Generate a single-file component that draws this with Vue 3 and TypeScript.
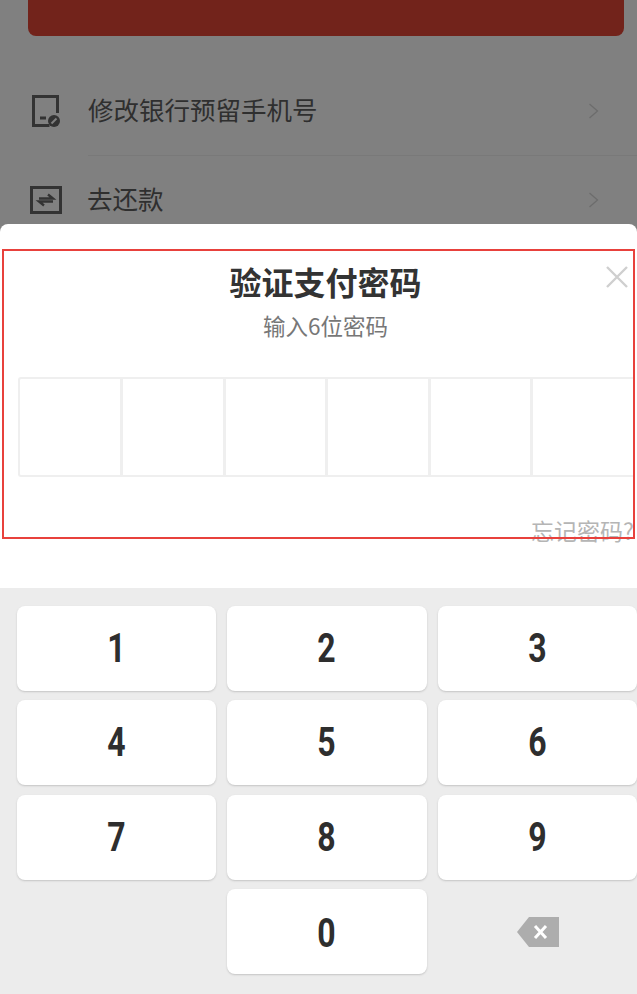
<template>
  <div class="page">
    <div class="behind">
      <div class="red-btn"></div>
      <div class="menu">
        <div class="menu-row first">
          <svg class="row-icon phone" width="28" height="32" viewBox="0 0 28 32">
            <path d="M25.5 18V1.5H1.5v29h16" fill="none" stroke="#333" stroke-width="3" />
            <path d="M8 23h6" stroke="#333" stroke-width="3" />
            <circle cx="22" cy="26" r="6" fill="#333" />
            <path d="M19.5 28.5l5-5" stroke="#808080" stroke-width="2" />
          </svg>
          <span class="row-label">修改银行预留手机号</span>
          <svg class="chev" width="11" height="16" viewBox="0 0 11 16">
            <path d="M1.5 1l8 7-8 7" fill="none" stroke="#6c6c6c" stroke-width="1.3" />
          </svg>
        </div>
        <div class="divider"></div>
        <div class="menu-row">
          <svg class="row-icon repay" width="32" height="28" viewBox="0 0 32 28">
            <rect x="1.5" y="1.5" width="29" height="25" fill="none" stroke="#333" stroke-width="3" />
            <path d="M9 12.500h14l-5-4M23 15.500H9l5 4" fill="none" stroke="#333" stroke-width="2.400" />
          </svg>
          <span class="row-label">去还款</span>
          <svg class="chev" width="11" height="16" viewBox="0 0 11 16">
            <path d="M1.5 1l8 7-8 7" fill="none" stroke="#6c6c6c" stroke-width="1.3" />
          </svg>
        </div>
      </div>
    </div>

    <div class="sheet">
      <div class="pay">
        <div class="title">验证支付密码</div>
        <svg class="close" width="24" height="24" viewBox="0 0 24 24">
          <path d="M2 2l20 20M22 2L2 22" stroke="#cfcfcf" stroke-width="2.400" />
        </svg>
        <div class="sub">输入6位密码</div>
        <div class="code">
          <div v-for="i in 6" :key="i" class="cell"></div>
        </div>
        <div class="forgot">忘记密码?</div>
        <div class="mark"></div>
      </div>

      <div class="keyboard">
        <button v-for="k in keys" :key="k" class="key"><span>{{ k }}</span></button>
        <div class="key-empty"></div>
        <button class="key zero"><span>0</span></button>
        <div class="key-del">
          <svg width="42" height="30" viewBox="0 0 42 30">
            <path d="M12 0h30v30H12L0 15z" fill="#adadad" />
            <path d="M18 9l11 12M29 9L18 21" stroke="#fff" stroke-width="3" />
          </svg>
        </div>
      </div>
    </div>
  </div>
</template>

<script setup lang="ts">
const keys: string[] = ['1', '2', '3', '4', '5', '6', '7', '8', '9'];
</script>

<style>
body {
  overflow: hidden;
}
</style>

<style scoped>
.page {
  width: 637px;
  height: 994px;
  display: flex;
  flex-direction: column;
  overflow: hidden;
  font-family: "Noto Sans CJK SC", "Liberation Sans", sans-serif;
  background: #808080;
}

.behind {
  height: 224px;
  flex: none;
  padding: 0 13px 0 28px;
  box-sizing: border-box;
  overflow: hidden;
}

.red-btn {
  height: 36px;
  background: #72231b;
  border-radius: 0 0 8px 8px;
}

.menu {
  padding-top: 31px;
}

.menu-row {
  height: 88px;
  display: flex;
  align-items: center;
}

.divider {
  height: 1px;
  margin: 0 -13px 0 60px;
  background: #797979;
}

.row-icon {
  flex: none;
}

.phone {
  margin: 0 28px 0 4px;
}

.repay {
  margin: 0 25px 0 2px;
}

.row-label {
  flex: 1;
  font-size: 25.5px;
  line-height: 34px;
  margin-top: -4px;
  color: #2f2f2f;
}

.chev {
  flex: none;
  margin-right: 25px;
}

.sheet {
  flex: 1;
  background: #fff;
  border-radius: 8px 8px 0 0;
  display: flex;
  flex-direction: column;
}

.pay {
  height: 364px;
  flex: none;
  position: relative;
  display: flex;
  flex-direction: column;
  align-items: center;
  padding: 34px 0 0 14px;
  box-sizing: border-box;
}

.title {
  font-size: 32px;
  line-height: 46px;
  font-weight: 700;
  color: #333;
}

.close {
  position: absolute;
  top: 41px;
  right: 8px;
}

.sub {
  font-size: 22.5px;
  line-height: 30px;
  margin-top: 6px;
  color: #777;
}

.code {
  align-self: flex-start;
  margin: 37px 0 0 4px;
  display: grid;
  grid-template-columns: 100px repeat(5, 102.5px);
  height: 100px;
  border: 2px solid #efefef;
  border-right: 0;
  box-sizing: border-box;
  border-radius: 3px 0 0 3px;
}

.cell + .cell {
  border-left: 3px solid #efefef;
}

.forgot {
  position: absolute;
  right: 3px;
  top: 290px;
  font-size: 23px;
  line-height: 32px;
  color: #b5b5b5;
}

.mark {
  position: absolute;
  left: 2px;
  top: 25px;
  width: 633px;
  height: 290px;
  box-sizing: border-box;
  border: 2px solid #e8413c;
  pointer-events: none;
}

.keyboard {
  flex: 1;
  background: #ececec;
  display: grid;
  grid-template-columns: repeat(3, 199.3px);
  grid-auto-rows: 84.8px;
  column-gap: 11px;
  row-gap: 9.700px;
  padding: 18px 0 0 17px;
  box-sizing: border-box;
}

.key {
  border: 0;
  padding: 0;
  background: #fff;
  border-radius: 8px;
  box-shadow: 0 1px 2px #c4c4c4;
  font-family: "Roboto", "Liberation Sans", sans-serif;
  font-size: 40px;
  font-weight: 700;
  color: #2e2e2e;
}

.key span {
  display: inline-block;
  transform: scaleX(0.8);
}

.zero span {
  margin-top: 4px;
}

.key-del {
  display: flex;
  align-items: center;
  justify-content: center;
  padding-left: 1px;
}
</style>
